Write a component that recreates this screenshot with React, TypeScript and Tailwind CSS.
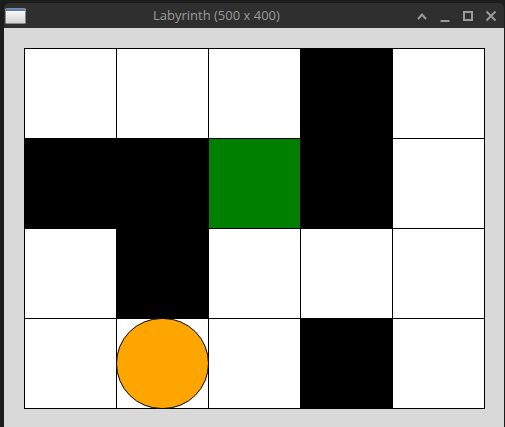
const maze: number[][] = [
  [0, 0, 0, 1, 0],
  [1, 1, 2, 1, 0],
  [0, 1, 0, 0, 0],
  [0, 0, 0, 1, 0],
];

const player = { row: 3, col: 1 };

function WindowIcon(): React.JSX.Element {
  return (
    <div className="w-[21px] h-[16px] border border-[#8a8a8a] rounded-[1px] bg-gradient-to-b from-white to-[#d4d4d4] flex flex-col">
      <div className="h-[2px] bg-[#5b7db8]" />
    </div>
  );
}

function TitleButtons(): React.JSX.Element {
  return (
    <div className="flex items-center gap-[9px] pr-[6px] text-[#9a9a9a]">
      <svg width="14" height="14" viewBox="0 0 14 14" fill="none" stroke="currentColor" strokeWidth="2">
        <path d="M3 10 L7 5.5 L11 10" />
      </svg>
      <svg width="14" height="14" viewBox="0 0 14 14" fill="none" stroke="currentColor" strokeWidth="2">
        <path d="M2.5 12 H11.5" />
      </svg>
      <svg width="14" height="14" viewBox="0 0 14 14" fill="none" stroke="currentColor" strokeWidth="2">
        <rect x="3" y="3" width="8" height="8" />
      </svg>
      <svg width="14" height="14" viewBox="0 0 14 14" fill="none" stroke="currentColor" strokeWidth="2">
        <path d="M2.5 2.5 L11.5 11.5 M11.5 2.5 L2.5 11.5" />
      </svg>
    </div>
  );
}

export default function App(): React.JSX.Element {
  return (
    <div className="w-[505px] h-[427px] bg-[#1c1c1c] pt-[3px] pl-[4px] overflow-hidden">
      <div className="w-[500px] flex flex-col">
        {/* Title bar */}
        <div className="h-[25px] bg-[#2f2f2f] rounded-t-[5px] flex items-center relative">
          <div className="pl-[1px] pt-[1px]">
            <WindowIcon />
          </div>
          <div
            className="absolute left-[149px] top-[3px] text-[13px] text-[#9a9a9a] leading-[18px]"
            style={{ fontFamily: '"Open Sans", "Noto Sans", sans-serif' }}
          >
            Labyrinth (500 x 400)
          </div>
          <div className="ml-auto">
            <TitleButtons />
          </div>
        </div>

        {/* Canvas */}
        <div className="h-[400px] bg-[#d9d9d9] p-[20px]">
          <div className="grid grid-cols-[repeat(5,91px)] grid-rows-[repeat(4,89px)] gap-px p-px bg-black w-fit">
            {maze.map((row, r) =>
              row.map((cell, c) => (
                <div
                  key={`${r}-${c}`}
                  className={
                    "relative " +
                    (cell === 1 ? "bg-black" : cell === 2 ? "bg-[#008000]" : "bg-white")
                  }
                >
                  {player.row === r && player.col === c && (
                    <div className="absolute -inset-px rounded-full bg-[#ffa500] border border-black" />
                  )}
                </div>
              ))
            )}
          </div>
        </div>
      </div>
    </div>
  );
}
